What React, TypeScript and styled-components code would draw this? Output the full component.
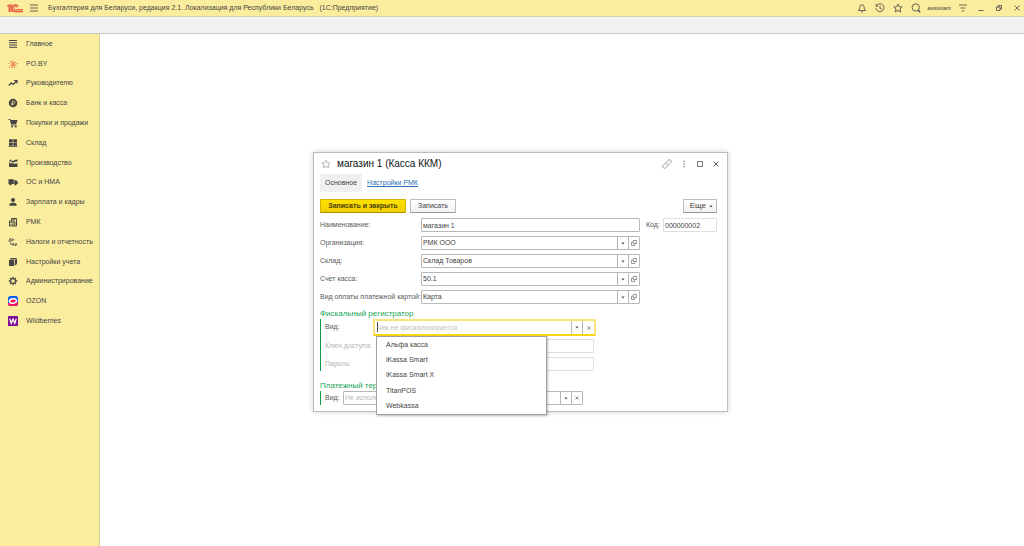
import React from "react";
import styled, { createGlobalStyle, css } from "styled-components";

const GlobalStyle = createGlobalStyle`
  *, *::before, *::after { box-sizing: border-box; }
  html, body, #root { height: 100%; }
  body { margin: 0; background: #fff; }
  body, button, input, select {
    font-family: "Liberation Sans", Arial, sans-serif;
    font-size: 7px;
    line-height: 10px;
    color: #444;
  }
  button { padding: 0; border: 0; background: none; cursor: pointer; }
  ul { margin: 0; padding: 0; list-style: none; }
  h1, h2, p { margin: 0; font-weight: 400; }
  svg { display: block; flex: none; }
`;

const Page = styled.div`
  min-height: 100%;
  display: flex;
  flex-direction: column;
`;

const TitleBar = styled.header`
  display: flex;
  align-items: center;
  height: 17px;
  padding: 0 2px 0 7px;
  background: #fbed9e;
  border-bottom: 1px solid #d8d2a8;
`;

const AppTitle = styled.p`
  flex: 1;
  margin-left: 4px;
  white-space: pre;
`;

const BarTools = styled.div`
  display: flex;
  align-items: center;
  gap: 8px;
`;

const UserName = styled.button`
  font-size: 6px;
  margin-left: -2px;
  margin-right: -1px;
`;

const IconButton = styled.button<{ $size?: number }>`
  display: grid;
  place-items: center;
  width: ${(p) => p.$size ?? 10}px;
  height: ${(p) => p.$size ?? 10}px;
  color: #444;
`;

const TabStrip = styled.div`
  height: 17px;
  background: #f0f2f2;
  border-bottom: 1px solid #c6c6c6;
`;

const Body = styled.div`
  flex: 1;
  display: flex;
`;

const Sidebar = styled.nav`
  width: 100px;
  background: #fbed9e;
  border-right: 1px solid #dcd3a0;
`;

const NavList = styled.ul`
  display: grid;
  grid-auto-rows: 1fr;
  height: 297px;
`;

const NavLink = styled.a`
  display: flex;
  align-items: center;
  gap: 8px;
  height: 100%;
  padding-left: 8px;
  color: #444;
  text-decoration: none;
  white-space: nowrap;
`;

const Workspace = styled.main`
  flex: 1;
  background: #fff;
`;

const Dialog = styled.section`
  position: absolute;
  left: 313px;
  top: 152px;
  width: 415px;
  padding: 5px 10px 6px 6px;
  background: #fff;
  border: 1px solid #bcbcbc;
  box-shadow: 0 0 5px rgba(0, 0, 0, 0.2);
`;

const DialogHead = styled.div`
  display: flex;
  align-items: center;
  height: 12px;
`;

const DialogTitle = styled.h1`
  flex: 1;
  margin-left: 5px;
  font-size: 10px;
  line-height: 12px;
  color: #111;
`;

const DialogTools = styled.div`
  display: flex;
  align-items: center;
  gap: 6px;
  margin-right: -4px;
`;

const Tabs = styled.nav`
  display: flex;
  align-items: center;
  gap: 5px;
  margin-top: 4px;
`;

const Tab = styled.a<{ $active?: boolean }>`
  display: flex;
  align-items: center;
  height: 18px;
  color: #2c6cb4;
  text-decoration: underline;
  ${(p) =>
    p.$active &&
    css`
      padding: 0 5px;
      background: #f0f0f0;
      color: #444;
      text-decoration: none;
    `}
`;

const CommandBar = styled.div`
  display: flex;
  gap: 4px;
  margin-top: 7px;
`;

const Command = styled.button<{ $primary?: boolean; $end?: boolean }>`
  height: 14px;
  padding: 0 7px;
  border: 1px solid #bdbdbd;
  border-bottom-color: #999;
  border-radius: 1px;
  background: linear-gradient(#fff, #f1f1f1);
  ${(p) =>
    p.$primary &&
    css`
      min-width: 86px;
      border-color: #d4b400;
      border-bottom-color: #a89000;
      background: linear-gradient(#ffe100, #f2cf00);
      color: #4a4200;
      font-weight: 700;
    `}
  ${(p) =>
    p.$end &&
    css`
      display: flex;
      align-items: center;
      gap: 3px;
      margin-left: auto;
      padding: 0 3px 0 6px;
      font-size: 8px;
    `}
`;

const Form = styled.form`
  display: grid;
  gap: 4px;
  margin-top: 5px;
`;

const Row = styled.div<{ $cols: string; $tall?: boolean }>`
  display: grid;
  grid-template-columns: ${(p) => p.$cols};
  align-items: center;
  height: ${(p) => (p.$tall ? 16 : 14)}px;
`;

const Label = styled.label<{ $dim?: boolean; $end?: boolean }>`
  white-space: nowrap;
  color: ${(p) => (p.$dim ? "#b4b4b4" : "#5a5a5a")};
  ${(p) => p.$end && "padding-left: 6px;"}
`;

const TextInput = styled.input<{ $faint?: boolean }>`
  width: 100%;
  height: 14px;
  padding: 0 1px;
  border: 1px solid ${(p) => (p.$faint ? "#dedede" : "#b8b8b8")};
  border-radius: 1px;
  background: #fff;
  outline: none;
`;

const Combo = styled.div<{ $focused?: boolean }>`
  display: grid;
  grid-template-columns: 1fr 11px 11px;
  height: 14px;
  border: 1px solid #b8b8b8;
  border-radius: 1px;
  background: #fff;
  ${(p) =>
    p.$focused &&
    css`
      grid-template-columns: 1fr 11px 12px;
      height: 17px;
      border: 2px solid #fbe27c;
      border-bottom-color: #f7d617;
    `}
`;

const ComboSelect = styled.select<{ $empty?: boolean }>`
  grid-area: 1 / 1 / 2 / 3;
  min-width: 0;
  height: 100%;
  padding: 0 1px;
  border: 0;
  appearance: none;
  background: none;
  outline: none;
  color: ${(p) => (p.$empty ? "#b8b8b8" : "#444")};
`;

const ComboInput = styled.input`
  min-width: 0;
  height: 100%;
  padding: 0 2px;
  border: 0;
  background: none;
  outline: none;
  &::placeholder { color: #c0c0c0; opacity: 1; }
`;

const ArrowCell = styled.span`
  grid-area: 1 / 2 / 2 / 3;
  display: grid;
  place-items: center;
  border-left: 1px solid #b8b8b8;
  pointer-events: none;
`;

const ComboButton = styled.button`
  display: grid;
  place-items: center;
  border-left: 1px solid #b8b8b8;
`;

const SectionTitle = styled.h2`
  font-size: 8px;
  line-height: 11px;
  color: #17a558;
`;

const Fiscal = styled.div`
  margin-top: 4px;
`;

const Payment = styled.div`
  margin-top: 9px;
`;

const Group = styled.div`
  display: grid;
  gap: 4px;
  padding-left: 4px;
  border-left: 1px solid #0a9a48;
`;

const FieldHolder = styled.div`
  position: relative;
  height: 16px;
  margin: 0 -2px 0 -3px;
`;

const Caret = styled.span`
  position: absolute;
  left: 4px;
  top: 3px;
  width: 1px;
  height: 10px;
  background: #555;
`;

const Options = styled.ul`
  position: absolute;
  z-index: 2;
  left: 3px;
  top: 17px;
  display: grid;
  grid-auto-rows: 1fr;
  width: 171px;
  height: 79px;
  border: 1px solid #a0a0a0;
  background: #fff;
  box-shadow: 1px 1px 2px rgba(0, 0, 0, 0.25);
`;

const Option = styled.li`
  display: flex;
  align-items: center;
  padding-left: 9px;
`;

const FISCAL_COLS = "51px 218px";

const Ico = ({ s = 10, children, color = "#444" }: { s?: number; children: React.ReactNode; color?: string }) => (
  <svg width={s} height={s} viewBox="0 0 20 20" fill="none" stroke={color} strokeWidth="1.6" aria-hidden="true">
    {children}
  </svg>
);

const Arrow = () => (
  <svg width="4" height="3" viewBox="0 0 4 3" aria-hidden="true">
    <path d="M0.300 0.500h3.400L2 2.500z" fill="#555" />
  </svg>
);

const OpenIcon = () => (
  <svg width="6" height="6" viewBox="0 0 12 12" fill="none" stroke="#777" strokeWidth="1.5" aria-hidden="true">
    <path d="M4.5 1h6.500v6H4.500zM4.500 4.500H1V11h6.500V7" />
  </svg>
);

const ClearIcon = () => (
  <svg width="4" height="4" viewBox="0 0 8 8" stroke="#777" strokeWidth="1.6" aria-hidden="true">
    <path d="M1 1l6 6M7 1L1 7" />
  </svg>
);

const Logo = () => (
  <svg width="16" height="10" viewBox="0 0 32 20" fill="none" stroke="#e8503c" aria-label="1С" role="img">
    <path d="M0.500 6.500L5 3.500" strokeWidth="2.500" />
    <path d="M4.500 4v14M8 2v16" strokeWidth="2.600" />
    <path d="M22.500 7.500a6.600 6.600 0 1 0-5.500 9.500H32" strokeWidth="2.600" />
    <path d="M19.500 8.500a3.200 3.200 0 1 0-2.500 4.800H32" strokeWidth="2" />
  </svg>
);

const solid = { fill: "#444", stroke: "none" };

const NAV: { text: string; icon: React.ReactNode }[] = [
  { text: "Главное", icon: <path d="M2 3h16M2 7.500h16M2 12h16M2 16.500h16" strokeWidth="2.2" /> },
  {
    text: "PO.BY",
    icon: (
      <g stroke="#e5532d" strokeWidth="1.600">
        <path d="M10 9V3M9 9L4 4M9 11l-5 2.500M8.500 12L8 18M11 9l5-3M11 11l6 1.500M11 12l2.500 6" />
        <g fill="#e5532d" stroke="none">
          <circle cx="10" cy="10" r="1.600" />
          <circle cx="2" cy="9" r="1.200" />
          <circle cx="18.500" cy="9" r="1.200" />
          <circle cx="3" cy="17" r="1.200" />
        </g>
      </g>
    ),
  },
  { text: "Руководителю", icon: <path d="M1.500 15l5-5.500 4 3.500L17 6M12 5h6v6" strokeWidth="2.4" /> },
  {
    text: "Банк и касса",
    icon: (
      <>
        <circle cx="10" cy="10" r="8.500" {...solid} />
        <path d="M8.500 15V6h3a2.200 2.200 0 0 1 0 4.600H6.500M6.500 13h5" stroke="#fbed9e" strokeWidth="1.3" />
      </>
    ),
  },
  {
    text: "Покупки и продажи",
    icon: (
      <>
        <path d="M4 4h15l-2.500 8H6.500z" {...solid} />
        <path d="M1 3h3.500l3 11H17" strokeWidth="1.8" />
        <circle cx="8" cy="17" r="2" {...solid} />
        <circle cx="15.500" cy="17" r="2" {...solid} />
      </>
    ),
  },
  { text: "Склад", icon: <path d="M2 2.500h7.500v6H2zM10.500 2.500h7.500v6h-7.500zM2 9.500h7.500v6H2zM10.500 9.500h7.500v6h-7.500zM1 16.500h18v1.500H1z" {...solid} /> },
  { text: "Производство", icon: <path d="M2 18V8l5 4V9l5 3 2-1h5v7zM2 6l4-4v3l5 1 2-2 6-1v4h-5l-3 3-4-3-3 0z" {...solid} /> },
  {
    text: "ОС и НМА",
    icon: (
      <>
        <path d="M1 4.500h10.500v9.500H1zM12.500 6.500h4l3 3.500v4h-7z" {...solid} />
        <circle cx="5" cy="14.500" r="2.300" {...solid} />
        <circle cx="15" cy="14.500" r="2.300" {...solid} />
      </>
    ),
  },
  {
    text: "Зарплата и кадры",
    icon: (
      <>
        <circle cx="10" cy="6" r="4" {...solid} />
        <path d="M3 17.500v-3q1-3 5-3h4q4 0 5 3v3z" {...solid} />
      </>
    ),
  },
  {
    text: "РМК",
    icon: (
      <>
        <path d="M3 8h9v10H3zM7 8V3h10v15h-5M9.500 5.500h5" strokeWidth="2" />
        <path d="M5 11h5M5 14.500h5M14 9v7" strokeWidth="1.600" />
      </>
    ),
  },
  {
    text: "Налоги и отчетность",
    icon: (
      <g strokeWidth="1.500">
        <path d="M2 8l2-5h2v5M1 8.500h6M8.500 8V4.500h3q0 3-3 2M5 11v3.500h5M10 17v-5l2.500 2.500M10 14.500l3 3M14.500 17.500v-4h3q0 4-3 3" />
      </g>
    ),
  },
  {
    text: "Настройки учета",
    icon: (
      <>
        <path d="M2 6h10v12H2z" {...solid} />
        <path d="M3 5l3-3h12l-4 3zM13.500 6.500L18 3v11l-4.500 3.500z" {...solid} />
      </>
    ),
  },
  {
    text: "Администрирование",
    icon: (
      <>
        <circle cx="10" cy="10" r="4.800" strokeWidth="2.400" />
        <path d="M10 1.500v3M10 15.500v3M1.500 10h3M15.500 10h3M4 4l2 2M14 14l2 2M4 16l2-2M14 6l2-2" strokeWidth="2.600" />
      </>
    ),
  },
  {
    text: "OZON",
    icon: (
      <>
        <rect x="0" y="0" width="20" height="20" rx="5" fill="#0a5bf5" stroke="none" />
        <path d="M0 14l20-2v3a5 5 0 0 1-5 5H5a5 5 0 0 1-5-5z" fill="#f5145f" stroke="none" />
        <ellipse cx="10" cy="10" rx="7" ry="4.500" stroke="#fff" strokeWidth="3" fill="#f5145f" transform="rotate(-10 10 10)" />
      </>
    ),
  },
  {
    text: "Wildberries",
    icon: (
      <>
        <rect x="0" y="0" width="20" height="20" rx="1" fill="#7d1296" stroke="none" />
        <path d="M3.500 5.500l3 9L10 6l3.500 8.500 3-9" stroke="#fff" strokeWidth="2.400" />
      </>
    ),
  },
];

const REFS = [
  { id: "org", label: "Организация:", value: "РМК ООО" },
  { id: "store", label: "Склад:", value: "Склад Товаров" },
  { id: "account", label: "Счет касса:", value: "50.1" },
  { id: "card", label: "Вид оплаты платежной картой:", value: "Карта" },
];

const KINDS = ["Альфа касса", "iKassa Smart", "iKassa Smart X", "TitanPOS", "Webkassa"];

export default function App() {
  return (
    <Page>
      <GlobalStyle />
      <TitleBar>
        <Logo />
        <IconButton aria-label="Меню" $size={21}>
          <Ico><path d="M2 4h16M2 10h16M2 16h16" /></Ico>
        </IconButton>
        <AppTitle>{"Бухгалтерия для Беларуси, редакция 2.1. Локализация для Республики Беларусь   (1С:Предприятие)"}</AppTitle>
        <BarTools>
          <IconButton aria-label="Уведомления">
            <Ico><path d="M2.500 15q3.500-2 3.500-7.500a4 4 0 0 1 8 0q0 5.500 3.500 7.500zM8 18h4" /></Ico>
          </IconButton>
          <IconButton aria-label="История">
            <Ico><path d="M3 5.500a8 8 0 1 1-1 5M2 2v4.500h4.500M10 5.500V11l4 2" /></Ico>
          </IconButton>
          <IconButton aria-label="Избранное">
            <Ico><path d="M10 2l2.400 5.500 6 .5-4.500 4 1.400 6L10 14.800 4.700 18l1.400-6-4.500-4 6-.5z" /></Ico>
          </IconButton>
          <IconButton aria-label="Поиск">
            <Ico><circle cx="9.500" cy="9" r="7.300" /><path d="M14 14l4.500 4.500" strokeWidth="2.600" /></Ico>
          </IconButton>
          <UserName>assistant</UserName>
          <IconButton aria-label="Настройка панели">
            <Ico><path d="M2 4h16M5 10h10" /><path d="M7.500 15h5L10 18z" {...solid} /></Ico>
          </IconButton>
          <IconButton aria-label="Свернуть">
            <Ico><path d="M5 15h10" /></Ico>
          </IconButton>
          <IconButton aria-label="Восстановить">
            <Ico><path d="M5 8h7v7H5zM8 8V5h7v7h-3" /></Ico>
          </IconButton>
          <IconButton aria-label="Закрыть">
            <Ico><path d="M5 5l10 10M15 5L5 15" /></Ico>
          </IconButton>
        </BarTools>
      </TitleBar>
      <TabStrip />
      <Body>
        <Sidebar>
          <NavList>
            {NAV.map((n) => (
              <li key={n.text}>
                <NavLink href="#">
                  <Ico>{n.icon}</Ico>
                  {n.text}
                </NavLink>
              </li>
            ))}
          </NavList>
        </Sidebar>
        <Workspace>
          <Dialog role="dialog" aria-labelledby="dialog-title">
            <DialogHead>
              <IconButton aria-label="В избранное" $size={12}>
                <Ico color="#aaa"><path d="M10 2l2.400 5.500 6 .5-4.500 4 1.400 6L10 14.800 4.700 18l1.400-6-4.500-4 6-.5z" /></Ico>
              </IconButton>
              <DialogTitle id="dialog-title">магазин 1 (Касса ККМ)</DialogTitle>
              <DialogTools>
                <IconButton aria-label="Ссылка" $size={12}>
                  <Ico color="#777"><path d="M8.500 6.500l4-4a3.400 3.400 0 0 1 5 5l-4 4a3.400 3.400 0 0 1-4.500 0M11.500 13.500l-4 4a3.400 3.400 0 0 1-5-5l4-4a3.400 3.400 0 0 1 4.500 0" strokeWidth="1.4" /></Ico>
                </IconButton>
                <IconButton aria-label="Ещё">
                  <Ico color="#555"><path d="M9 4.500h2.500M9 10h2.500M9 15.500h2.500" strokeWidth="2.400" /></Ico>
                </IconButton>
                <IconButton aria-label="Развернуть">
                  <Ico color="#555"><path d="M5 5h10v10H5z" /></Ico>
                </IconButton>
                <IconButton aria-label="Закрыть окно">
                  <Ico color="#555"><path d="M5 5l10 10M15 5L5 15" strokeWidth="1.8" /></Ico>
                </IconButton>
              </DialogTools>
            </DialogHead>
            <Tabs>
              <Tab href="#" $active>Основное</Tab>
              <Tab href="#">Настройки РМК</Tab>
            </Tabs>
            <CommandBar>
              <Command type="button" $primary>Записать и закрыть</Command>
              <Command type="button">Записать</Command>
              <Command type="button" $end>Еще <Arrow /></Command>
            </CommandBar>
            <Form>
              <Row $cols="101px 219px 23px 1fr">
                <Label htmlFor="name">Наименование:</Label>
                <TextInput id="name" defaultValue="магазин 1" />
                <Label htmlFor="code" $end>Код:</Label>
                <TextInput id="code" defaultValue="000000002" $faint />
              </Row>
              {REFS.map((r) => (
                <Row key={r.id} $cols="101px 219px">
                  <Label htmlFor={r.id}>{r.label}</Label>
                  <Combo>
                    <ComboSelect id={r.id}><option>{r.value}</option></ComboSelect>
                    <ArrowCell><Arrow /></ArrowCell>
                    <ComboButton type="button" aria-label="Открыть"><OpenIcon /></ComboButton>
                  </Combo>
                </Row>
              ))}
            </Form>
            <Fiscal>
              <SectionTitle>Фискальный регистратор</SectionTitle>
              <Group>
                <Row $cols={FISCAL_COLS} $tall>
                  <Label htmlFor="kind">Вид:</Label>
                  <FieldHolder>
                    <Combo $focused>
                      <ComboInput id="kind" role="combobox" aria-expanded="true" aria-controls="kinds" placeholder="Чек не фискализируется" />
                      <ComboButton type="button" aria-label="Выбрать"><Arrow /></ComboButton>
                      <ComboButton type="button" aria-label="Очистить"><ClearIcon /></ComboButton>
                    </Combo>
                    <Caret />
                    <Options id="kinds" role="listbox">
                      {KINDS.map((k) => (
                        <Option key={k} role="option">{k}</Option>
                      ))}
                    </Options>
                  </FieldHolder>
                </Row>
                <Row $cols={FISCAL_COLS}>
                  <Label htmlFor="key" $dim>Ключ доступа:</Label>
                  <TextInput id="key" $faint />
                </Row>
                <Row $cols={FISCAL_COLS}>
                  <Label htmlFor="pass" $dim>Пароль:</Label>
                  <TextInput id="pass" type="password" $faint />
                </Row>
              </Group>
            </Fiscal>
            <Payment>
              <SectionTitle>Платежный терминал</SectionTitle>
              <Group>
                <Row $cols="18px 240px">
                  <Label htmlFor="terminal">Вид:</Label>
                  <Combo>
                    <ComboSelect id="terminal" $empty><option>Не используется</option></ComboSelect>
                    <ArrowCell><Arrow /></ArrowCell>
                    <ComboButton type="button" aria-label="Очистить"><ClearIcon /></ComboButton>
                  </Combo>
                </Row>
              </Group>
            </Payment>
          </Dialog>
        </Workspace>
      </Body>
    </Page>
  );
}
